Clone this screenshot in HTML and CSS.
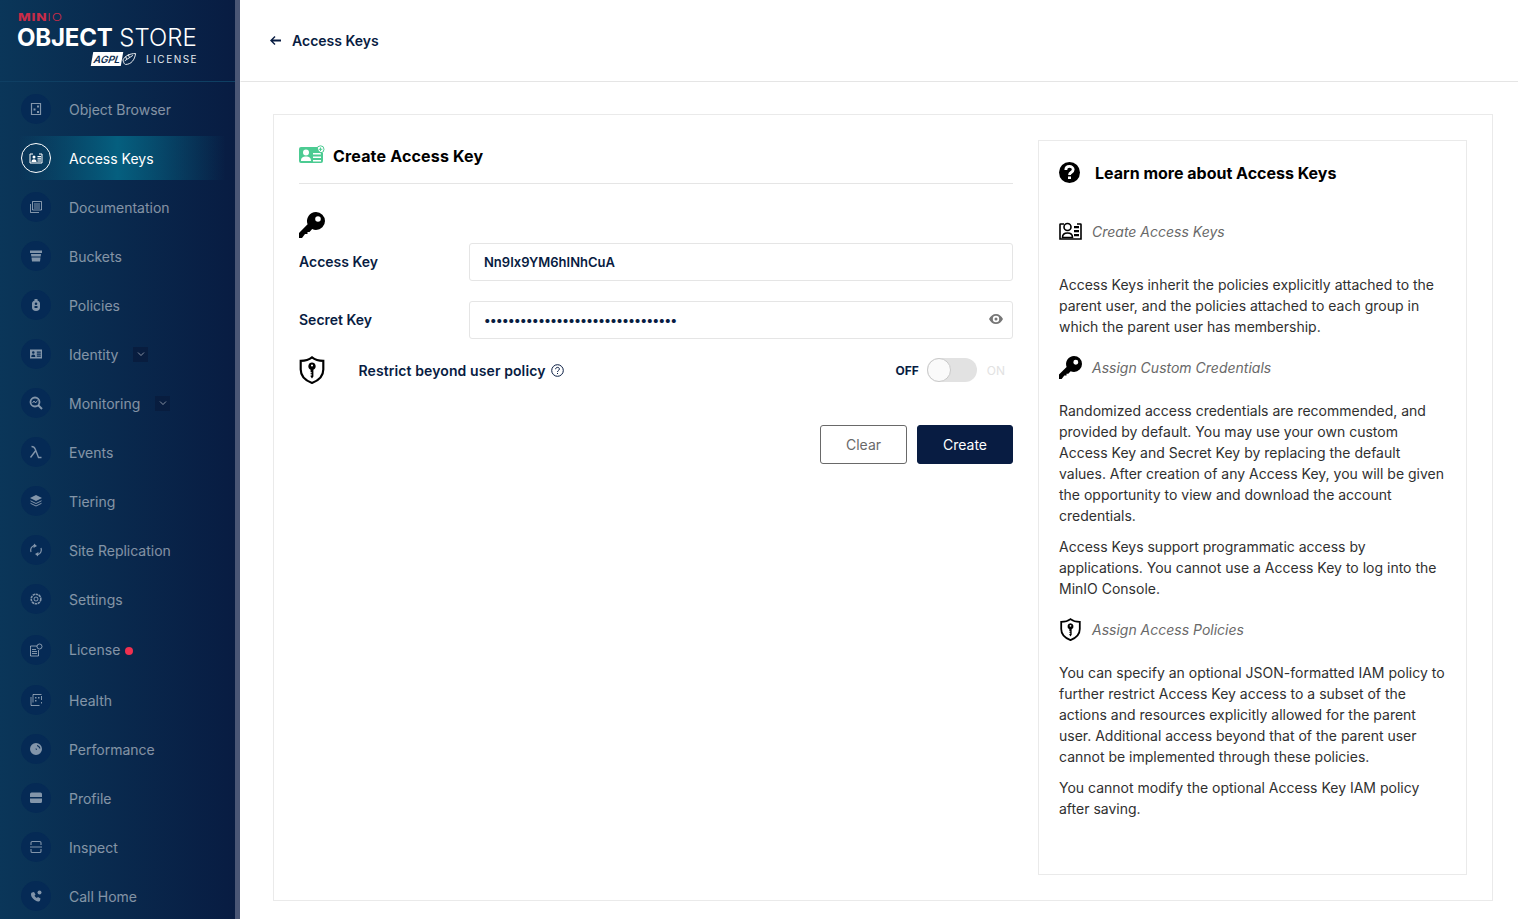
FILE: index.html
```html
<!DOCTYPE html>
<html>
<head>
    <title>MinIO Console - Create Access Key</title>
    <link rel="stylesheet" href="styles.css">
</head>
<body>
    <svg class="sprites" width="0" height="0">
        <symbol id="key" viewBox="0 0 26 26"><path fill-rule="evenodd" d="M17 0a9 9 0 0 1 0 18c-1.400 0-2.700-.3-3.800-.9L10.500 20H8.500v2h-2.500l-3 4H0v-5L8.600 12.300A9 9 0 0 1 17 0zm2 4.200a2.800 2.800 0 1 0 0 5.600 2.800 2.800 0 0 0 0-5.600z"/></symbol>
        <symbol id="shield" viewBox="0 0 24 26"><path fill="none" stroke="currentColor" stroke-width="2" d="M12 1.300C14.500 3.300 18 4.500 22.500 4.500V12.500C22.500 18.500 18 22.800 12 25 6 22.800 1.500 18.500 1.500 12.500V4.500C6 4.500 9.500 3.300 12 1.300z"/><path fill-rule="evenodd" d="M12 6a3.500 3.500 0 0 1 1.300 6.700V19l-1.300 1.800L10.700 19v-1h1v-1h-1v-1h1v-1h-1v-2.300A3.500 3.500 0 0 1 12 6zm0 1.800a1 1 0 1 0 0 2 1 1 0 0 0 0-2z"/></symbol>
    </svg>

    <div class="page">
        <nav class="sidebar">
            <div class="logo">
                <div class="logo-minio"><b>MIN</b>IO</div>
                <div class="logo-name"><b>OBJECT</b> STORE</div>
                <div class="logo-license">
                    <span class="agpl"><i>AGPL</i><svg width="16" height="14" viewBox="0 0 16 14"><path fill="none" stroke="#fff" d="M1 8c3-5 8-7 14-7-1 7-5 12-11 12-1 0-2-1-3-5zm2 1 9-6M5 7 4 4m4 1L7 2"/></svg></span>
                    <span class="license-word">LICENSE</span>
                </div>
            </div>

            <div class="menu">
                <a class="menu-item"><span class="menu-icon"><svg viewBox="0 0 14 14"><path fill="none" stroke="currentColor" stroke-width="1.200" d="M2.500 1.500h9v11h-9z"/><path d="M8 3.500h2v2H8zM4.500 6.500h2v2h-2zM8 9h2v2H8z"/></svg></span><span class="menu-label">Object Browser</span></a>
                <a class="menu-item active"><span class="menu-icon"><svg viewBox="0 0 14 14"><path fill="none" stroke="currentColor" d="M4 3H1v9h12V3h-3"/><circle cx="5" cy="6" r="1.500"/><path d="M2.500 11c0-2 1-2.800 2.500-2.800S7.500 9 7.500 11zM8.500 5H12v1.200H8.500zM8.500 7.200H12v1.200H8.500zM8.500 9.400H12v1.200H8.500z"/></svg></span><span class="menu-label">Access Keys</span></a>
                <a class="menu-item"><span class="menu-icon"><svg viewBox="0 0 14 14"><path fill="none" stroke="currentColor" d="M3.500 1.500h9v8.500h-9zM1.500 4v8.500H10"/><path d="M5 3.500h6v1H5zM5 5.500h6v1H5zM5 7.500h6v1H5z"/></svg></span><span class="menu-label">Documentation</span></a>
                <a class="menu-item"><span class="menu-icon"><svg viewBox="0 0 14 14"><path d="M1 1.500h12v2.500H1zM2 5h10l-.3 2.500H2.300zM2.500 8.500h9l-.5 4H3z"/></svg></span><span class="menu-label">Buckets</span></a>
                <a class="menu-item"><span class="menu-icon"><svg viewBox="0 0 14 14"><path fill-rule="evenodd" d="M5.500 1h3v1.500c1.500.500 2.500 1.500 2.500 3v4c0 2-1.500 3.500-4 3.500s-4-1.500-4-3.500v-4c0-1.500 1-2.500 2.500-3zM7 4.500a1.300 1.300 0 1 0 0 2.600 1.300 1.300 0 0 0 0-2.600zM5.500 8v2h3V8z"/></svg></span><span class="menu-label">Policies</span></a>
                <a class="menu-item"><span class="menu-icon"><svg viewBox="0 0 14 14"><path fill-rule="evenodd" d="M1 2.500h12v9H1zM4.300 4.200a1.300 1.300 0 1 0 0 2.600 1.300 1.300 0 0 0 0-2.600zM2.300 10h4c0-1.800-.8-2.500-2-2.500s-2 .7-2 2.500zM7.800 4.500v1.200h4V4.500zM7.800 6.500v1.200h4V6.500zM7.800 8.500v1.200h4V8.500z"/></svg></span><span class="menu-label">Identity</span><span class="chevron"><svg viewBox="0 0 8 8"><path fill="none" stroke="currentColor" d="M1 2.500 4 5.500 7 2.500"/></svg></span></a>
                <a class="menu-item"><span class="menu-icon"><svg viewBox="0 0 14 14"><circle cx="6" cy="6" r="4.500" fill="none" stroke="currentColor" stroke-width="1.800"/><path fill="none" stroke="currentColor" d="M3.500 7 5 5l1.500 2L8.500 4.500"/><path fill="none" stroke="currentColor" stroke-width="2" d="m9.500 9.500 3.500 3.500"/></svg></span><span class="menu-label">Monitoring</span><span class="chevron"><svg viewBox="0 0 8 8"><path fill="none" stroke="currentColor" d="M1 2.500 4 5.500 7 2.500"/></svg></span></a>
                <a class="menu-item"><span class="menu-icon"><svg viewBox="0 0 14 14"><path fill="none" stroke="currentColor" stroke-width="1.400" d="M2.500 1.500c2 0 3 .8 3.800 2.800L9.500 12.500h3M6.800 5.500 1.500 12.500"/></svg></span><span class="menu-label">Events</span></a>
                <a class="menu-item"><span class="menu-icon"><svg viewBox="0 0 14 14"><path d="M7 1l6 3-6 3-6-3z"/><path fill="none" stroke="currentColor" d="M1.500 6.800 7 9.500l5.500-2.700M1.500 9.300 7 12l5.500-2.700"/></svg></span><span class="menu-label">Tiering</span></a>
                <a class="menu-item"><span class="menu-icon"><svg viewBox="0 0 14 14"><path fill="none" stroke="currentColor" stroke-width="1.200" d="M2 9A5 5 0 0 1 5 2.500M12 5a5 5 0 0 1-3 6.500"/><path d="M5 .5l3 2.500-3.500 2zM9 13.500 6 11l3.500-2z"/></svg></span><span class="menu-label">Site Replication</span></a>
                <a class="menu-item"><span class="menu-icon"><svg viewBox="0 0 14 14"><circle cx="7" cy="7" r="4.800" fill="none" stroke="currentColor" stroke-width="1.600" stroke-dasharray="2.500 .6"/><circle cx="7" cy="7" r="2" fill="none" stroke="currentColor"/></svg></span><span class="menu-label">Settings</span></a>
                <a class="menu-item license-item"><span class="menu-icon"><svg viewBox="0 0 14 14"><path fill="none" stroke="currentColor" d="M8 3H1.500v10h8V7"/><path d="M3 6h4v1H3zM3 8h5v1H3zM3 10h5v1H3z"/><circle cx="10.500" cy="3.500" r="2.500" fill="none" stroke="currentColor"/></svg></span><span class="menu-label">License</span><span class="red-dot"></span></a>
                <a class="menu-item"><span class="menu-icon"><svg viewBox="0 0 14 14"><path fill="none" stroke="currentColor" d="M2 4v8.500h8.500M4 1.500h8.500M12.500 3v4M4 1.500v8"/><path d="M6 4h1.500v1.500H6zM9 4h1.500v1.500H9zM6 7h1.500v1.500H6zM12 9h1v1.500h-1z"/></svg></span><span class="menu-label">Health</span></a>
                <a class="menu-item"><span class="menu-icon"><svg viewBox="0 0 14 14"><path fill-rule="evenodd" d="M7 1a6 6 0 1 1 0 12A6 6 0 0 1 7 1zm1 2v1.200c1.500.3 2 1.300 2.300 2.300h1.200C11.200 4.700 9.800 3.200 8 3zM6.500 6.500 7 8l1-.5-.5-1z"/></svg></span><span class="menu-label">Performance</span></a>
                <a class="menu-item"><span class="menu-icon"><svg viewBox="0 0 14 14"><path d="M2.500 1.500h9A1.500 1.500 0 0 1 13 3v3H1V3a1.500 1.500 0 0 1 1.500-1.500zM1 7.500h12v3A1.500 1.500 0 0 1 11.500 12h-9A1.500 1.500 0 0 1 1 10.500z"/></svg></span><span class="menu-label">Profile</span></a>
                <a class="menu-item"><span class="menu-icon"><svg viewBox="0 0 14 14"><path fill="none" stroke="currentColor" stroke-width="1.100" d="M2 5V2.800c0-.7.500-1.300 1.300-1.300h7.400c.8 0 1.300.6 1.300 1.300V5M2 9v2.200c0 .7.500 1.300 1.300 1.300h7.400c.8 0 1.300-.6 1.300-1.300V9M1 7h12"/></svg></span><span class="menu-label">Inspect</span></a>
                <a class="menu-item"><span class="menu-icon"><svg viewBox="0 0 14 14"><path d="M3 3.500 5 3l1.500 2.500-1 1.200c.5 1 1.300 1.800 2.300 2.300l1.200-1 2.500 1.500-.5 2c-.3.800-1 1-1.800 1C5.500 12 2 8.500 2 5.300c0-.8.300-1.500 1-1.800z"/><circle cx="10.500" cy="3.500" r="2"/></svg></span><span class="menu-label">Call Home</span></a>
            </div>
        </nav>
        <div class="sidebar-edge"></div>

        <main class="content">
            <header class="top-bar">
                <svg class="back-arrow" width="11" height="9" viewBox="0 0 11 9"><path fill="#081c42" d="M4.500 0 5.500 1 3 3.500h8v2H3L5.500 8l-1 1L0 4.500z"/></svg>
                <span class="top-title">Access Keys</span>
            </header>

            <div class="card-wrap">
                <section class="card">
                    <div class="form-panel">
                        <div class="form-title">
                            <svg width="26" height="18" viewBox="0 0 26 18"><path fill="#4ccb92" fill-rule="evenodd" d="M2 2h16.500a6 6 0 0 0 5.500 6v8a2 2 0 0 1-2 2H2a2 2 0 0 1-2-2V4a2 2 0 0 1 2-2zm5 2.500a3 3 0 1 0 0 6 3 3 0 0 0 0-6zM2 16h10c0-3.500-2-4.500-5-4.500S2 12.500 2 16zm12-8v1.500h8V8zm0 3.500V13h8v-1.500zm0 3.500v1.500h8V15z"/><circle cx="21.500" cy="4.300" r="3.500" fill="none" stroke="#4ccb92"/><path fill="#4ccb92" d="M21 2.500h1v1.300h1.300v1H22V6h-1V4.800h-1.300v-1H21z"/></svg>
                            <h1>Create Access Key</h1>
                        </div>
                        <svg class="key-icon"><use href="#key"/></svg>
                        <div class="field">
                            <label>Access Key</label>
                            <input class="text-input" type="text" value="Nn9Ix9YM6hINhCuA">
                        </div>
                        <div class="field">
                            <label>Secret Key</label>
                            <div class="input-wrap">
                                <input class="text-input secret" type="password" value="abcdefghijklmnopqrstuvwxyz123456">
                                <svg class="eye" width="14" height="10" viewBox="0 0 14 10"><path fill="#777" fill-rule="evenodd" d="M7 0c3 0 5.500 2 7 5-1.500 3-4 5-7 5S1.500 8 0 5c1.500-3 4-5 7-5zm0 1.800a3.200 3.200 0 1 0 0 6.400 3.200 3.200 0 0 0 0-6.400zM7 3.500a1.500 1.500 0 1 1 0 3 1.500 1.500 0 0 1 0-3z"/></svg>
                            </div>
                        </div>
                        <div class="restrict-row">
                            <svg class="shield-icon"><use href="#shield"/></svg>
                            <span class="restrict-label">Restrict beyond user policy</span>
                            <svg class="help-small" width="13" height="13" viewBox="0 0 13 13"><circle cx="6.500" cy="6.500" r="5.800" fill="none" stroke="#081c42"/><path fill="none" stroke="#081c42" d="M4.600 5.200c0-2.400 3.800-2.400 3.800-.2 0 1.500-1.900 1.400-1.900 3"/><path fill="#081c42" d="M6 9h1v1H6z"/></svg>
                            <div class="toggle-group">
                                <span class="toggle-off">OFF</span>
                                <span class="toggle"><span class="knob"></span></span>
                                <span class="toggle-on">ON</span>
                            </div>
                        </div>
                        <div class="buttons">
                            <button class="btn btn-clear">Clear</button>
                            <button class="btn btn-create">Create</button>
                        </div>
                    </div>

                    <aside class="help-box">
                        <div class="help-title">
                            <svg width="21" height="21" viewBox="0 0 21 21"><circle cx="10.500" cy="10.500" r="10.500"/><path fill="none" stroke="#fff" stroke-width="2.800" d="M6.800 8c0-4.800 7.400-4.500 7.400-.4 0 2.800-3.700 2.500-3.700 5.400"/><path fill="#fff" d="M9 14.500h3V17H9z"/></svg>
                            <h2>Learn more about Access Keys</h2>
                        </div>
                        <div class="help-head first">
                            <svg width="23" height="18" viewBox="0 0 23 18"><path fill="none" stroke="#000" stroke-width="1.600" d="M5 2H1.500a.5.500 0 0 0-.5.500v14.500h21V2.500a.5.500 0 0 0-.5-.5H18"/><circle cx="8.500" cy="5" r="3.500" fill="none" stroke="#000" stroke-width="1.600"/><path fill="none" stroke="#000" stroke-width="1.600" d="M3.500 15.500c0-3.500 2-4.500 5-4.500s5 1 5 4.500z"/><path d="M15 4h5v2.200h-5zM15 8h5v2.200h-5zM15 12h5v2.200h-5z"/></svg>
                            <span>Create Access Keys</span>
                        </div>
                        <p class="after-first">Access Keys inherit the policies explicitly attached to the parent user, and the policies attached to each group in which the parent user has membership.</p>
                        <div class="help-head">
                            <svg class="help-icon"><use href="#key"/></svg>
                            <span>Assign Custom Credentials</span>
                        </div>
                        <p class="after-head">Randomized access credentials are recommended, and provided by default. You may use your own custom Access Key and Secret Key by replacing the default values. After creation of any Access Key, you will be given the opportunity to view and download the account credentials.</p>
                        <p>Access Keys support programmatic access by applications. You cannot use a Access Key to log into the MinIO Console.</p>
                        <div class="help-head">
                            <svg class="help-icon"><use href="#shield"/></svg>
                            <span>Assign Access Policies</span>
                        </div>
                        <p class="after-head">You can specify an optional JSON-formatted IAM policy to further restrict Access Key access to a subset of the actions and resources explicitly allowed for the parent user. Additional access beyond that of the parent user cannot be implemented through these policies.</p>
                        <p>You cannot modify the optional Access Key IAM policy after saving.</p>
                    </aside>
                </section>
            </div>
        </main>
    </div>
</body>
</html>
```

FILE: styles.css
```css
* {
    box-sizing: border-box;
}
body {
    font-family: Inter, "Liberation Sans", sans-serif;
    margin: 0;
    height: 100vh;
    overflow: hidden;
    background-color: #fff;
    color: #000;
    font-size: 14px;
}
.sprites {
    position: absolute;
}
.page {
    display: flex;
    height: 100vh;
}

/* sidebar */
.sidebar {
    width: 235px;
    flex-shrink: 0;
    overflow: hidden;
    background: linear-gradient(90deg, #0a3659 0%, #081c42 100%);
    color: #fff;
}
.sidebar-edge {
    width: 5px;
    flex-shrink: 0;
    background-color: #4a5675;
}
.logo {
    height: 82px;
    padding: 12px 0 0 17px;
    border-bottom: 1px solid #0f3f63;
}
.logo-minio {
    color: #c72c48;
    font-size: 10px;
    line-height: 10px;
    letter-spacing: .6px;
    font-weight: 300;
    margin-left: 1px;
    transform: scaleX(1.350);
    transform-origin: left;
}
.logo-minio b {
    font-weight: 800;
}
.logo-name {
    font-size: 24px;
    line-height: 28px;
    font-weight: 300;
    margin-top: 2px;
    white-space: nowrap;
}
.logo-name b {
    font-weight: 700;
    letter-spacing: -.2px;
}
.logo-license {
    display: flex;
    align-items: center;
}
.agpl {
    display: flex;
    align-items: center;
    width: 45px;
    margin-left: 75px;
}
.agpl i {
    background-color: #fff;
    color: #0a2a4d;
    font-size: 10px;
    line-height: 14px;
    font-weight: 600;
    padding: 0 2px;
    transform: skewX(-10deg);
}
.license-word {
    margin-left: 9px;
    font-size: 10px;
    letter-spacing: 1.500px;
    color: #e4e8ec;
}
.menu {
    padding-top: 2.500px;
}
.menu-item {
    display: flex;
    align-items: center;
    height: 49px;
    padding-left: 21px;
    color: rgba(255, 255, 255, .5);
}
.license-item {
    height: 52px;
}
.menu-icon {
    width: 30px;
    height: 30px;
    border-radius: 50%;
    background-color: #052a55;
    display: flex;
    align-items: center;
    justify-content: center;
    flex-shrink: 0;
}
.menu-icon svg {
    width: 14px;
    height: 14px;
    fill: currentColor;
}
.menu-label {
    margin-left: 18px;
}
.menu-item.active {
    color: #fff;
    background: linear-gradient(90deg, transparent 8%, #055f7f 50%, transparent 96%) 0 center / 100% 44px no-repeat;
}
.active .menu-icon {
    background-color: transparent;
    border: 1px solid #fff;
}
.chevron {
    width: 15px;
    height: 15px;
    margin-left: 15px;
    background-color: #081d3f;
    display: flex;
    align-items: center;
    justify-content: center;
}
.chevron svg {
    width: 8px;
    height: 8px;
}
.red-dot {
    width: 8px;
    height: 8px;
    margin: 2px 0 0 5px;
    border-radius: 50%;
    background-color: #f0304f;
}

/* main area */
.content {
    flex: 1;
    min-width: 0;
    display: flex;
    flex-direction: column;
}
.top-bar {
    height: 82px;
    flex-shrink: 0;
    display: flex;
    align-items: center;
    padding-left: 29px;
    border-bottom: 1px solid #e5e5e5;
    border-left: 1px solid #fff;
}
.back-arrow {
    margin-right: 11px;
}
.top-title {
    color: #081c42;
    font-weight: 600;
    font-size: 14px;
}
.card-wrap {
    padding: 32px 25px 0 33px;
}
.card {
    height: 787px;
    border: 1px solid #eaeaea;
    padding: 25px;
    display: flex;
    gap: 25px;
}
.form-panel {
    width: 714px;
    flex-shrink: 0;
}
.form-title {
    display: flex;
    align-items: center;
    height: 44px;
    border-bottom: 1px solid #e5e5e5;
    padding-bottom: 12px;
}
.form-title svg {
    margin: -4px 8px 0 0;
}
.form-title h1 {
    font-size: 16px;
    font-weight: 700;
    letter-spacing: .17px;
    margin: 0;
}
.key-icon {
    display: block;
    width: 26px;
    height: 26px;
    margin: 28px 0 5px;
}
.field {
    display: flex;
    align-items: center;
    height: 38px;
    margin-bottom: 20px;
}
.field label {
    width: 170px;
    flex-shrink: 0;
    padding-bottom: 2px;
    font-weight: 600;
    color: #081c42;
}
.input-wrap {
    flex: 1;
    position: relative;
    height: 38px;
}
.text-input {
    width: 100%;
    flex: 1;
    height: 38px;
    border: 1px solid #e5e5e5;
    border-radius: 3px;
    padding: 0 14px;
    font-family: Inter, "Liberation Sans", sans-serif;
    font-size: 13px;
    font-weight: 600;
    color: #081c42;
    outline: none;
}
.text-input.secret {
    letter-spacing: -.53px;
}
.eye {
    position: absolute;
    right: 10px;
    top: 13px;
}
.restrict-row {
    display: flex;
    align-items: center;
    height: 24px;
    margin-top: -1px;
}
.shield-icon {
    width: 26px;
    height: 28px;
    color: #000;
}
.restrict-label {
    margin-left: 33.500px;
    font-weight: 600;
    letter-spacing: .1px;
    color: #081c42;
}
.help-small {
    margin-left: 6px;
}
.toggle-group {
    margin-left: auto;
    display: flex;
    align-items: center;
    padding-right: 8px;
    font-size: 12px;
}
.toggle-off {
    font-weight: 700;
    color: #081c42;
}
.toggle-on {
    color: #e2e2e2;
}
.toggle {
    width: 50px;
    height: 24px;
    margin: 0 10px 0 8px;
    background-color: #e2e2e2;
    border-radius: 12px;
    display: flex;
}
.knob {
    width: 24px;
    height: 24px;
    border-radius: 50%;
    background-color: #fafafa;
    border: 1px solid #c9c9c9;
}
.buttons {
    display: flex;
    justify-content: flex-end;
    gap: 10px;
    margin-top: 43px;
}
.btn {
    height: 39px;
    border-radius: 3px;
    font-family: Inter, "Liberation Sans", sans-serif;
    font-size: 14px;
    cursor: pointer;
}
.btn-clear {
    width: 87px;
    background-color: #fff;
    border: 1px solid #696969;
    color: #696969;
}
.btn-create {
    width: 96px;
    background-color: #081c42;
    border: 1px solid #081c42;
    color: #fff;
}

/* help panel */
.help-box {
    width: 429px;
    flex-shrink: 0;
    height: 735px;
    border: 1px solid #eaeaea;
    padding: 21px 20px;
}
.help-title {
    display: flex;
    align-items: center;
    gap: 15px;
    height: 21px;
}
.help-title h2 {
    font-size: 16px;
    font-weight: 700;
    margin: 0;
}
.help-head {
    display: flex;
    align-items: center;
    height: 24px;
    margin-top: 18px;
    color: #696969;
    font-style: italic;
}
.help-head.first {
    margin-top: 36px;
}
.help-head svg {
    flex-shrink: 0;
    margin-right: 10px;
    color: #000;
}
.help-icon {
    width: 23px;
    height: 23px;
}
.help-box p {
    margin: 0 0 10px;
    line-height: 21px;
    color: #303030;
}
.help-box p.after-first {
    margin-top: 31px;
}
.help-box p.after-head {
    margin-top: 21px;
}
```
